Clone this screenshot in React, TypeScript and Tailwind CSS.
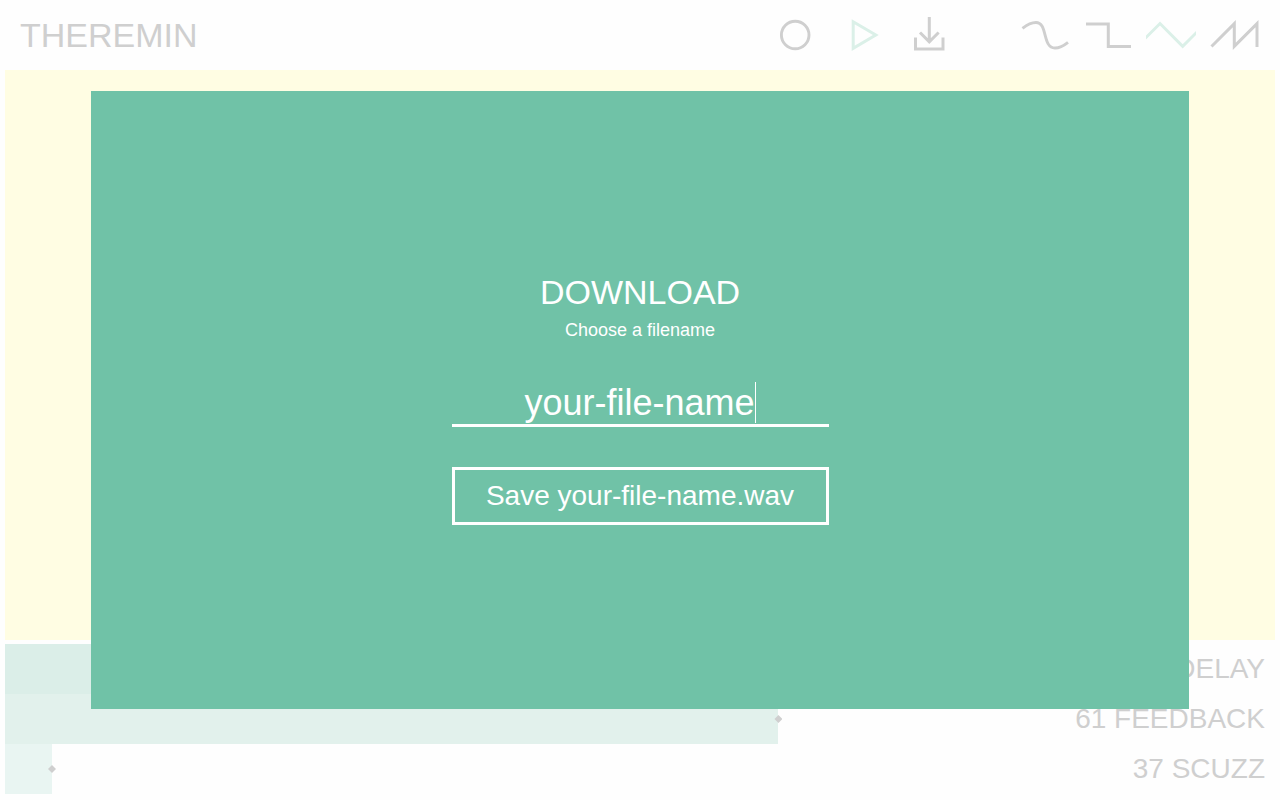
import { useState, type ReactNode } from 'react';

function IconButton({ label, active = false, children }: { label: string; active?: boolean; children: ReactNode }) {
  return (
    <button
      type="button"
      aria-label={label}
      aria-pressed={active}
      className={active ? 'text-[#dbf0e8]' : 'text-[#cfcfcf]'}
    >
      <svg
        viewBox="0 0 50 50"
        className="block h-[50px] w-[50px]"
        fill="none"
        stroke="currentColor"
        strokeWidth="3"
        strokeMiterlimit="10"
        aria-hidden="true"
      >
        {children}
      </svg>
    </button>
  );
}

type EffectProps = { id: string; name: string; initial: number; display: (v: number) => number; tint: string };

function Effect({ id, name, initial, display, tint }: EffectProps) {
  const [value, setValue] = useState(initial);
  return (
    <div className="relative h-[50px]">
      <div className={`h-full ${tint}`} style={{ width: `${value}%` }} />
      <div className="absolute inset-y-0 -inset-x-[4px] flex">
        <input
          id={id}
          type="range"
          min={0}
          max={100}
          step={0.1}
          value={value}
          onChange={(e) => setValue(Number(e.target.value))}
          className="h-full w-full cursor-pointer appearance-none bg-transparent outline-none [&::-webkit-slider-thumb]:h-[8px] [&::-webkit-slider-thumb]:w-[8px] [&::-webkit-slider-thumb]:appearance-none [&::-webkit-slider-thumb]:bg-[#cfcfcf] [&::-webkit-slider-thumb]:[clip-path:polygon(50%_0,100%_50%,50%_100%,0_50%)]"
        />
      </div>
      <label
        htmlFor={id}
        className="pointer-events-none absolute inset-y-0 right-[10px] text-[28px] leading-[50px] text-[#cfcfcf]"
      >
        {display(value)} {name}
      </label>
    </div>
  );
}

export default function App() {
  const [fileName, setFileName] = useState('your-file-name');

  return (
    <div className="flex min-h-screen flex-col bg-[#fefefe] px-[5px] pb-[6px] font-['Liberation_Sans',Arial,sans-serif]">
      <header className="flex h-[70px] items-center justify-between pr-4 pl-[15px]">
        <h1 className="text-[34px] leading-[38px] text-[#cfcfcf]">THEREMIN</h1>
        <div className="flex items-center gap-[66px]">
          <div className="flex gap-[17px]">
            <IconButton label="Record">
              <circle cx="25.2" cy="25" r="13.8" strokeWidth="2.9" />
            </IconButton>
            <IconButton label="Play" active>
              <path d="M16.2 11.8 L38.8 25 L16.2 38.4 Z" />
            </IconButton>
            <IconButton label="Download">
              <path d="M25.3 7 V31.5 M16 22.5 L25.3 31.8 L34.6 22.5 M11.5 27.5 V39 H39 V27.5" />
            </IconButton>
          </div>
          <div className="flex gap-[13px]">
            <IconButton label="Sine wave">
              <path
                d="M2.5 18.3 C8 14 12 12.5 16 12.5 C28 12.5 22 38 35 38 C39.5 38 44 35.5 48 32.3"
                strokeWidth="2.9"
              />
            </IconButton>
            <IconButton label="Square wave">
              <path d="M3 14 H25.3 V36.5 H48" />
            </IconButton>
            <IconButton label="Triangle wave" active>
              <path d="M-2 29.5 L14 13.5 L36.7 36.3 L52 21" />
            </IconButton>
            <IconButton label="Sawtooth wave">
              <path d="M2.5 36.5 L25.3 13.7 V36.3 L48 13.7 V37" />
            </IconButton>
          </div>
        </div>
      </header>

      <main className="flex-1 bg-[#fffde3]" />

      <section aria-label="Effects" className="mt-1">
        <Effect id="delay" name="DELAY" initial={50} display={(v) => Math.round(v)} tint="bg-[#dbeee8]" />
        <Effect id="feedback" name="FEEDBACK" initial={60.9} display={(v) => Math.round(v)} tint="bg-[#e2f1ec]" />
        <Effect id="scuzz" name="SCUZZ" initial={3.7} display={(v) => Math.round(v * 10)} tint="bg-[#e9f5f2]" />
      </section>

      <div
        role="dialog"
        aria-modal="true"
        aria-labelledby="download-title"
        className="fixed inset-[91px] flex items-center justify-center bg-[#70c2a7] pb-1 text-white"
      >
        <form className="flex w-[377px] flex-col text-center" onSubmit={(e) => e.preventDefault()}>
          <h2 id="download-title" className="text-[34px] leading-10">
            DOWNLOAD
          </h2>
          <label htmlFor="file-name" className="mt-1.5 text-lg leading-6">
            Choose a filename
          </label>
          <div className="mt-10 flex h-[45px] justify-center border-b-3 border-white">
            <input
              id="file-name"
              type="text"
              value={fileName}
              onChange={(e) => setFileName(e.target.value)}
              className="field-sizing-content max-w-full bg-transparent text-4xl leading-[42px] caret-transparent outline-none"
            />
            <span aria-hidden="true" className="h-[41px] w-px bg-white" />
          </div>
          <button type="submit" className="mt-10 h-[58px] border-3 border-white text-[28px] leading-8">
            Save {fileName}.wav
          </button>
        </form>
      </div>
    </div>
  );
}
